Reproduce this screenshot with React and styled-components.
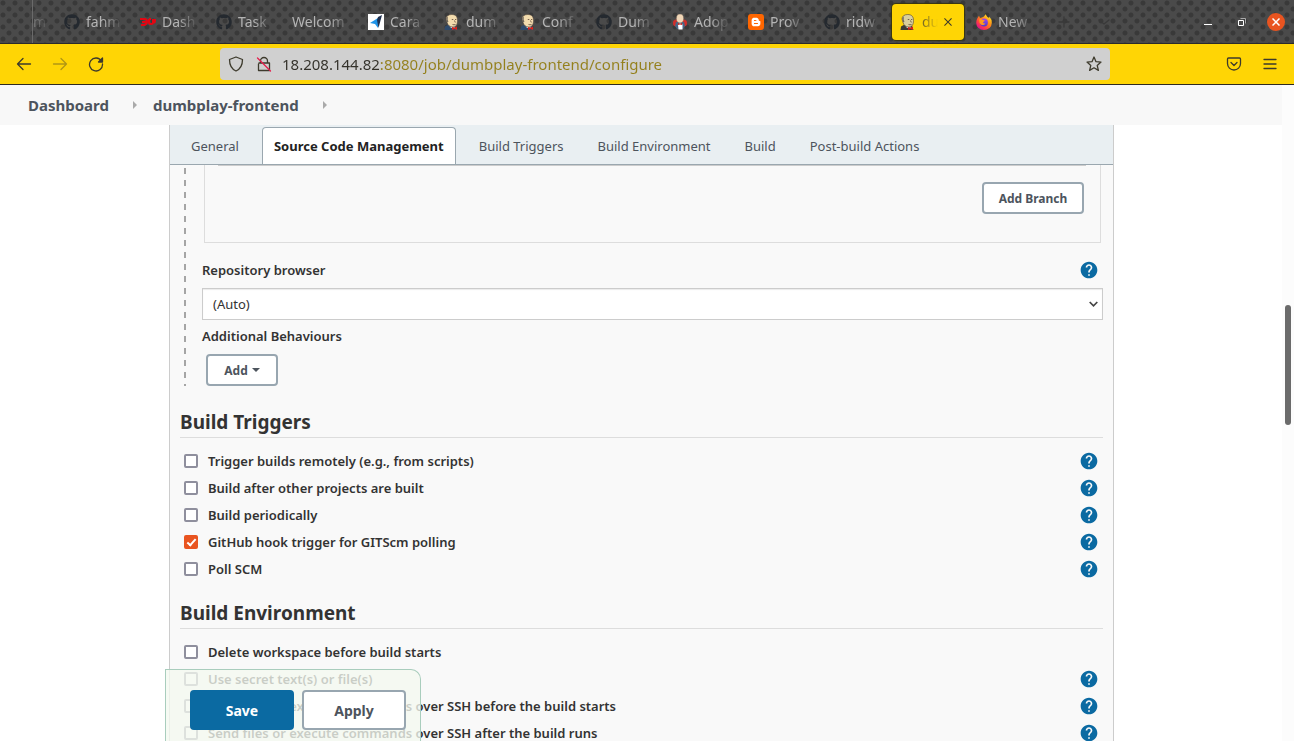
import React from "react";
import styled, { createGlobalStyle, css } from "styled-components";
import { FaGithub, FaBloggerB } from "react-icons/fa";
import { MdHelp } from "react-icons/md";

const Global = createGlobalStyle`
  *, *::before, *::after { box-sizing: border-box; }
  body { margin: 0; background: #fff; }
  body, button, input, select { font-family: "Noto Sans", "Open Sans", sans-serif; }
  button { cursor: pointer; }
`;

const Shell = styled.div`
  display: flex;
  flex-direction: column;
  height: 100vh;
  overflow: hidden;
  color: #333;
  font-size: 13px;
`;

/* Browser chrome */

const TitleBar = styled.header`
  flex: none;
  display: flex;
  align-items: center;
  height: 44px;
  border-bottom: 1px solid #2b2b2b;
  background-color: #4a4a4a;
  background-image:
    radial-gradient(circle at 3px 3px, #393939 2px, transparent 3px),
    radial-gradient(circle at 9px 9px, #393939 2px, transparent 3px);
  background-size: 12px 12px;
`;

const PinnedArea = styled.div`
  width: 33px;
  height: 43px;
  border-right: 1px solid #6a6a6a;
`;

const Tabs = styled.div`
  display: flex;
  flex: 1;
  min-width: 0;
`;

const BrowserTab = styled.button`
  flex: none;
  display: flex;
  align-items: center;
  gap: 6px;
  width: ${(p) => (p.$partial ? 19 : 72)}px;
  height: 36px;
  margin: 0 4px 0 0;
  padding: ${(p) => (p.$partial ? 0 : p.$active ? "0 12px 0 8px" : "0 6px 0 8px")};
  border: 0;
  border-radius: 4px;
  background: ${(p) => (p.$active ? "#ffd505" : "transparent")};
  box-shadow: ${(p) => (p.$active ? "0 0 1px 1px #38360f" : "none")};
  color: ${(p) => (p.$active ? "#4a4530" : "#b4b4b4")};
  font-size: 14px;
  line-height: 20px;

  svg { flex: none; }
`;

const TabTitle = styled.span`
  flex: 1;
  min-width: 0;
  overflow: hidden;
  white-space: nowrap;
  text-align: left;
  opacity: ${(p) => (p.$dim ? 0.5 : 1)};
  mask-image: linear-gradient(to left, transparent, #000 20px);
`;

const GhostButton = styled.button`
  display: flex;
  align-items: center;
  justify-content: center;
  width: 40px;
  padding: 0;
  border: 0;
  background: transparent;
  color: #393939;
`;

const WindowControls = styled.div`
  display: flex;
  align-items: center;
  gap: 16px;
  padding-right: 9px;
`;

const WindowButton = styled.button`
  display: flex;
  align-items: center;
  justify-content: center;
  width: 18px;
  height: 18px;
  padding: 0;
  border: 0;
  border-radius: 50%;
  background: ${(p) => (p.$close ? "#e95420" : "transparent")};
  color: #fff;
`;

const NavBar = styled.nav`
  flex: none;
  display: flex;
  align-items: center;
  height: 41px;
  padding: 0 14px;
  border-bottom: 1px solid #2e2a20;
  background: #ffd505;
`;

const NavGroup = styled.div`
  display: flex;
  justify-content: ${(p) => (p.$end ? "flex-end" : "flex-start")};
  gap: 16px;
  width: ${(p) => (p.$end ? 170 : 206)}px;
`;

const IconButton = styled.button`
  display: flex;
  align-items: center;
  justify-content: center;
  width: 20px;
  height: 20px;
  padding: 0;
  border: 0;
  background: transparent;
  color: #3d3a2c;
  opacity: ${(p) => (p.disabled ? 0.4 : 1)};
`;

const AddressBar = styled.div`
  flex: 1;
  min-width: 0;
  display: flex;
  align-items: center;
  gap: 8px;
  height: 32px;
  padding: 0 6px;
  border-radius: 4px;
  background: #d0d0d0;
`;

const AddressInput = styled.input`
  flex: 1;
  min-width: 0;
  height: 32px;
  padding: 0;
  border: 0;
  outline: 0;
  background: linear-gradient(to right, #33312a 98px, #94801c 98px);
  background-clip: text;
  -webkit-background-clip: text;
  color: transparent;
  font-size: 15px;
`;

/* Page */

const Viewport = styled.div`
  flex: 1;
  display: flex;
  min-height: 0;
`;

const Page = styled.div`
  position: relative;
  flex: 1;
  min-width: 0;
  overflow: hidden;
`;

const ScrollTrack = styled.div`
  width: 12px;
  padding: 220px 3px 0;
  background: #fcfcfc;
`;

const ScrollThumb = styled.div`
  height: 120px;
  border-radius: 3px;
  background: #6b6b6b;
`;

const Breadcrumbs = styled.nav`
  display: flex;
  align-items: center;
  gap: 16px;
  height: 40px;
  padding: 0 28px;
  background: #f8f8f8;
`;

const Crumb = styled.a`
  color: #4d545d;
  font-size: 15px;
  font-weight: 700;
  text-decoration: none;
`;

const CrumbArrow = styled.span`
  width: 0;
  height: 0;
  margin-left: 8px;
  border: 4px solid transparent;
  border-left-color: #aaa;
  border-right: 0;
`;

const Panel = styled.main`
  margin: 0 168px 0 169px;
  border: solid #ccc;
  border-width: 0 1px;
  background: #f9f9f9;
`;

const SectionTabs = styled.div`
  display: flex;
  align-items: flex-end;
  gap: 12px;
  height: 40px;
  padding: 0 10px;
  border-bottom: 1px solid #9aa7af;
  background: #e9eff2;
`;

const SectionTab = styled.a`
  height: 37px;
  padding: 0 10px;
  border: 1px solid transparent;
  border-bottom: 0;
  border-radius: 4px 4px 0 0;
  color: #4d545d;
  font-size: 13px;
  line-height: 36px;
  text-decoration: none;
  white-space: nowrap;
  ${(p) =>
    p.$active &&
    css`
      padding: 0 11px;
      border-color: #9aa7af;
      background: #fff;
      color: #222;
      font-weight: 700;
    `}
`;

const Form = styled.form`
  padding: 0 10px;
`;

const ScmBlock = styled.div`
  margin-bottom: 21px;
  padding-left: 22px;
  background: repeating-linear-gradient(to bottom, transparent 0 3px, #a5a5a5 3px 9px, transparent 9px 12px)
    4px 0 / 2px 100% no-repeat;
`;

const BranchBox = styled.div`
  height: 78px;
  margin: 0 2px 13px;
  padding: 0 14px 0 13px;
  border: 1px solid #ddd;
  border-top: 0;
`;

const BranchActions = styled.div`
  display: flex;
  justify-content: flex-end;
  padding: 16px 2px 0 0;
  border-top: 1px solid #ccc;
`;

const SmallButton = styled.button`
  display: flex;
  align-items: center;
  justify-content: center;
  gap: 4px;
  width: ${(p) => (p.$wide ? 102 : 72)}px;
  height: 32px;
  margin: ${(p) => (p.$wide ? 0 : "2px 0 0 4px")};
  padding: 0;
  border: 2px solid #98a6b0;
  border-radius: 4px;
  background: #fff;
  color: #4d545d;
  font-size: 12px;
  font-weight: 700;
`;

const Caret = styled.span`
  border: 4px solid transparent;
  border-top-color: currentColor;
  border-bottom: 0;
`;

const FieldHeader = styled.div`
  display: flex;
  align-items: center;
  justify-content: space-between;
  height: ${(p) => (p.$tall ? 32 : 28)}px;
  margin-bottom: ${(p) => (p.$tall ? 0 : 4)}px;
  padding-right: 4px;
  font-weight: 600;
`;

const SelectBox = styled.div`
  position: relative;

  svg {
    position: absolute;
    right: 5px;
    top: 12px;
    pointer-events: none;
  }
`;

const Select = styled.select`
  display: block;
  width: 100%;
  height: 32px;
  padding: 0 10px;
  appearance: none;
  border: 1px solid #ccc;
  border-radius: 0;
  background: #fff;
  box-shadow: inset 0 1px 1px rgba(0, 0, 0, 0.08);
  color: #333;
  font-size: 13px;
`;

const SectionHeading = styled.h2`
  margin: 16px 0 9px;
  border-bottom: 1px solid #ddd;
  color: #333;
  font-size: 19px;
  font-weight: 700;
  line-height: 30px;
`;

const OptionRow = styled.div`
  display: flex;
  align-items: center;
  justify-content: space-between;
  height: 27px;
  padding: 0 4px;
`;

const OptionLabel = styled.label`
  display: flex;
  align-items: center;
  gap: 10px;
  font-weight: 600;
  white-space: nowrap;
`;

const Checkbox = styled.input`
  display: flex;
  justify-content: center;
  width: 14px;
  height: 14px;
  margin: 0;
  appearance: none;
  border: 2px solid #8f8f9d;
  border-radius: 2px;
  background: #fff;

  &:checked {
    border-color: #e95420;
    background: #e95420;
  }

  &:checked::after {
    content: "";
    width: 5px;
    height: 9px;
    border: solid #fff;
    border-width: 0 2px 2px 0;
    transform: rotate(42deg);
  }
`;

const HelpButton = styled.button`
  display: flex;
  padding: 0;
  border: 0;
  background: transparent;
  color: #0b6aa2;
`;

const ActionBar = styled.div`
  position: absolute;
  left: 165px;
  bottom: 0;
  display: flex;
  gap: 8px;
  padding: 20px 14px 11px 24px;
  border: 1px solid #a9cdbd;
  border-bottom: 0;
  border-radius: 0 10px 0 0;
  background: rgba(244, 248, 240, 0.78);
`;

const ActionButton = styled.button`
  width: 104px;
  height: 40px;
  border: 2px solid ${(p) => (p.$primary ? "#0b6aa2" : "#98a6b0")};
  border-radius: 4px;
  background: ${(p) => (p.$primary ? "#0b6aa2" : "#fff")};
  color: ${(p) => (p.$primary ? "#fff" : "#4d545d")};
  font-size: 14px;
  font-weight: 700;
`;

/* Icons */

const Line = ({ size = 16, width = 1.3, children }) => (
  <svg width={size} height={size} viewBox="0 0 16 16" fill="none" stroke="currentColor" strokeWidth={width} strokeLinecap="round" strokeLinejoin="round">
    {children}
  </svg>
);

const GithubIcon = () => <FaGithub size={16} color="#24292f" />;

const ButlerIcon = ({ muted }) => (
  <svg width="16" height="16" viewBox="0 0 16 16">
    <path d="M.5 16 1 12.500 4.500 10.500 12 12 13.500 16Z" fill={muted ? "#3c3c36" : "#2f4a6b"} />
    <path d="M5 11 7 14 11 13.500 10 11Z" fill="#eee" />
    <path d="M2 5C2 2 4.500.5 7.800.5 11.500.5 13.500 2.500 13.500 6.500 13.500 10.500 12 13 9 13 6 13 4 11.500 3 8.500Z" fill={muted ? "#d9cf9d" : "#f3dcae"} stroke="#4b4037" strokeWidth=".6" />
    <path d="M2.200 4.500 3.800 2.300 3.700 6 4.500 7.500 3.200 8.500Z" fill="#6b645c" />
    <path d="M7.800 5.500h1.500M11 5.500h1.300M8.500 10.500q1.500.6 3 0M10.500 6.500l.8 2" stroke="#5a4436" strokeWidth=".8" fill="none" />
    <path d="M8 13l2.500.8 2.500-1.300v3.500L10.500 15 8 16Z" fill="#d9231c" />
  </svg>
);

const LauncherIcon = () => (
  <svg width="16" height="16" viewBox="0 0 16 16">
    <circle cx="4.500" cy="9" r="3.600" fill="#cf2f2b" />
    <circle cx="11.500" cy="9" r="3.600" fill="#cf2f2b" />
    <path d="M4 8h8l1 4-2 3h-6l-2-3Z" fill="#4a6684" />
    <ellipse cx="8" cy="4.500" rx="3.600" ry="4.400" fill="#f0d6b7" stroke="#6b5a4c" strokeWidth=".4" />
    <path d="M6 10.500 8 9.500l2.500 1v5h-4Z" fill="#fff" />
    <path d="M6 9l2 1 2-1v2L8 10.500 6 11Z" fill="#d9231c" />
  </svg>
);

const DumbwaysIcon = () => (
  <svg width="16" height="16" viewBox="0 0 16 16" fill="none" stroke="#e30613" strokeWidth="2">
    <path d="M0 5h4.500Q7 5 7 7.500T4.500 11H1M2 8h4" />
    <path d="M9 5v3.500Q9 10 11 10t2-1.500V5M9 5h2M13 8.500Q15 9 15 7V5" />
  </svg>
);

const TravelIcon = () => (
  <svg width="16" height="16" viewBox="0 0 16 16">
    <path d="M0 0h16v16H0Z" fill="#fff" />
    <path d="M2 9 10 4v10L7 10Z" fill="#2094e8" />
    <path d="M10 3 14 1 10.500 14 9 6Z" fill="#20304f" />
  </svg>
);

const BloggerIcon = () => (
  <svg width="16" height="16" viewBox="0 0 16 16">
    <rect width="16" height="16" rx="3" fill="#ff6600" />
    <FaBloggerB x="3" y="3" size={10} color="#fff" />
  </svg>
);

const FirefoxIcon = () => (
  <svg width="16" height="16" viewBox="0 0 16 16">
    <defs>
      <linearGradient id="flame" x1=".85" y1=".1" x2=".2" y2=".9">
        <stop offset="0" stopColor="#ffe226" />
        <stop offset=".4" stopColor="#ff8a16" />
        <stop offset=".75" stopColor="#ff3b47" />
        <stop offset="1" stopColor="#e31587" />
      </linearGradient>
      <linearGradient id="globe" x1="0" y1="0" x2="0" y2="1">
        <stop offset="0" stopColor="#a045ef" />
        <stop offset="1" stopColor="#4c3fc8" />
      </linearGradient>
    </defs>
    <path d="M1.500 4 3 1.800 4 4 6 3.600 8 2.500 9.500.2Q11 3 13 4l.5-1.200Q16 5.500 15.800 8.800A7.800 7.200 0 0 1 .2 8.800Q.2 6 1.500 4Z" fill="url(#flame)" />
    <circle cx="8" cy="8.500" r="3.900" fill="url(#globe)" />
    <path d="M3 5.500Q5 4.500 7 6L9 6.500 7 8.200Q7.200 10 9.500 9.500 7.500 12 5 10.500 3 9 3 5.500Z" fill="#ff9a1a" />
  </svg>
);

const Help = ({ topic }) => (
  <HelpButton type="button" aria-label={`Help for feature: ${topic}`}>
    <MdHelp size={20} />
  </HelpButton>
);

const browserTabs = [
  { title: "fahm", icon: <GithubIcon /> },
  { title: "Dash", icon: <DumbwaysIcon /> },
  { title: "Task", icon: <GithubIcon /> },
  { title: "Welcom" },
  { title: "Cara", icon: <TravelIcon /> },
  { title: "dum", icon: <ButlerIcon /> },
  { title: "Conf", icon: <ButlerIcon /> },
  { title: "Dum", icon: <GithubIcon /> },
  { title: "Adop", icon: <LauncherIcon /> },
  { title: "Prov", icon: <BloggerIcon /> },
  { title: "ridw", icon: <GithubIcon /> },
  { title: "du", icon: <ButlerIcon muted />, active: true },
  { title: "New", icon: <FirefoxIcon /> },
];

const sections = ["General", "Source Code Management", "Build Triggers", "Build Environment", "Build", "Post-build Actions"];

const triggers = [
  { label: "Trigger builds remotely (e.g., from scripts)", help: true },
  { label: "Build after other projects are built", help: true },
  { label: "Build periodically", help: true },
  { label: "GitHub hook trigger for GITScm polling", help: true, checked: true },
  { label: "Poll SCM", help: true },
];

const environment = [
  { label: "Delete workspace before build starts" },
  { label: "Use secret text(s) or file(s)", help: true },
  { label: "Send files or execute commands over SSH before the build starts", help: true },
  { label: "Send files or execute commands over SSH after the build runs", help: true },
];

const Options = ({ items }) =>
  items.map((item) => (
    <OptionRow key={item.label}>
      <OptionLabel>
        <Checkbox type="checkbox" defaultChecked={item.checked} />
        {item.label}
      </OptionLabel>
      {item.help && <Help topic={item.label} />}
    </OptionRow>
  ));

export default function App() {
  return (
    <Shell>
      <Global />
      <TitleBar>
        <PinnedArea />
        <Tabs role="tablist">
          <BrowserTab $partial role="tab">
            <TabTitle $dim>m</TabTitle>
          </BrowserTab>
          {browserTabs.map((tab, i) => (
            <BrowserTab key={i} role="tab" $active={tab.active} aria-selected={!!tab.active}>
              {tab.icon}
              <TabTitle>{tab.title}</TabTitle>
              {tab.active && (
                <svg width="8" height="8" viewBox="0 0 9 9" stroke="#3d3a2c" strokeWidth="1.2">
                  <path d="M.5.5l8 8M8.500.5l-8 8" />
                </svg>
              )}
            </BrowserTab>
          ))}
          <GhostButton aria-label="New tab">
            <Line><path d="M8 3v10M3 8h10" /></Line>
          </GhostButton>
          <GhostButton aria-label="List all tabs">
            <Line><path d="M3 6l5 4 5-4" /></Line>
          </GhostButton>
        </Tabs>
        <WindowControls>
          <WindowButton aria-label="Minimize">
            <svg width="8" height="8"><path d="M0 6.500h8" stroke="#fff" /></svg>
          </WindowButton>
          <WindowButton aria-label="Restore">
            <svg width="8" height="8" fill="none">
              <path d="M.5 2.500h5v5h-5z" stroke="#fff" />
              <path d="M2.500.5h5v5" stroke="#aaa" />
            </svg>
          </WindowButton>
          <WindowButton $close aria-label="Close">
            <svg width="8" height="8" stroke="#fff" strokeWidth="1.500"><path d="M.5.5l7 7M7.500.5l-7 7" /></svg>
          </WindowButton>
        </WindowControls>
      </TitleBar>

      <NavBar>
        <NavGroup>
          <IconButton aria-label="Back">
            <Line><path d="M14.500 8H1.500M7 2.500 1.500 8 7 13.500" /></Line>
          </IconButton>
          <IconButton aria-label="Forward" disabled>
            <Line><path d="M1.500 8h13M9 2.500 14.500 8 9 13.500" /></Line>
          </IconButton>
          <IconButton aria-label="Reload">
            <Line>
              <path d="M13.500 5A6.500 6.500 0 1 0 14.500 8" />
              <path d="M14.500 2v4h-4Z" fill="currentColor" />
            </Line>
          </IconButton>
        </NavGroup>
        <AddressBar>
          <IconButton as="span">
            <Line><path d="M8 1 14.500 3.500C14.500 9 12.500 13 8 15 3.500 13 1.500 9 1.500 3.500Z" /></Line>
          </IconButton>
          <IconButton as="span">
            <Line>
              <path d="M4.500 7V5a3.500 3.500 0 0 1 7 0v2M3 7h10.500v7.500H2.500V8" />
              <path d="M1.500 2 14.500 15" stroke="#e4204d" />
            </Line>
          </IconButton>
          <AddressInput aria-label="Address" defaultValue="18.208.144.82:8080/job/dumbplay-frontend/configure" />
          <IconButton aria-label="Bookmark this page">
            <Line><path d="M8 1 10 5.700l5 .4-3.800 3.300 1.200 5L8 11.800l-4.400 2.600 1.200-5L1 6.100l5-.4Z" /></Line>
          </IconButton>
        </AddressBar>
        <NavGroup $end>
          <IconButton aria-label="Save to Pocket">
            <Line><path d="M2.500 2h11q1 0 1 1v4.500a6.500 6.500 0 0 1-13 0V3q0-1 1-1ZM5 6.500l3 3 3-3" /></Line>
          </IconButton>
          <IconButton aria-label="Open application menu">
            <Line><path d="M2 3.500h12M2 8h12M2 12.500h12" /></Line>
          </IconButton>
        </NavGroup>
      </NavBar>

      <Viewport>
        <Page>
          <Breadcrumbs>
            <Crumb href="#dashboard">Dashboard</Crumb>
            <CrumbArrow />
            <Crumb href="#job">dumbplay-frontend</Crumb>
            <CrumbArrow />
          </Breadcrumbs>
          <Panel>
            <SectionTabs>
              {sections.map((name) => (
                <SectionTab key={name} href={`#${name}`} $active={name === "Source Code Management"}>
                  {name}
                </SectionTab>
              ))}
            </SectionTabs>
            <Form>
              <ScmBlock>
                <BranchBox>
                  <BranchActions>
                    <SmallButton type="button" $wide>Add Branch</SmallButton>
                  </BranchActions>
                </BranchBox>
                <FieldHeader>
                  <label htmlFor="browser">Repository browser</label>
                  <Help topic="Repository browser" />
                </FieldHeader>
                <SelectBox>
                  <Select id="browser">
                    <option>(Auto)</option>
                  </Select>
                  <svg width="9" height="8" viewBox="0 0 9 8" fill="none" stroke="#444" strokeWidth="1.700">
                    <path d="M.7 2 4.500 5.800 8.300 2" />
                  </svg>
                </SelectBox>
                <FieldHeader $tall>Additional Behaviours</FieldHeader>
                <SmallButton type="button">
                  Add <Caret />
                </SmallButton>
              </ScmBlock>
              <SectionHeading>Build Triggers</SectionHeading>
              <Options items={triggers} />
              <SectionHeading>Build Environment</SectionHeading>
              <Options items={environment} />
            </Form>
          </Panel>
          <ActionBar>
            <ActionButton type="button" $primary>Save</ActionButton>
            <ActionButton type="button">Apply</ActionButton>
          </ActionBar>
        </Page>
        <ScrollTrack>
          <ScrollThumb />
        </ScrollTrack>
      </Viewport>
    </Shell>
  );
}
